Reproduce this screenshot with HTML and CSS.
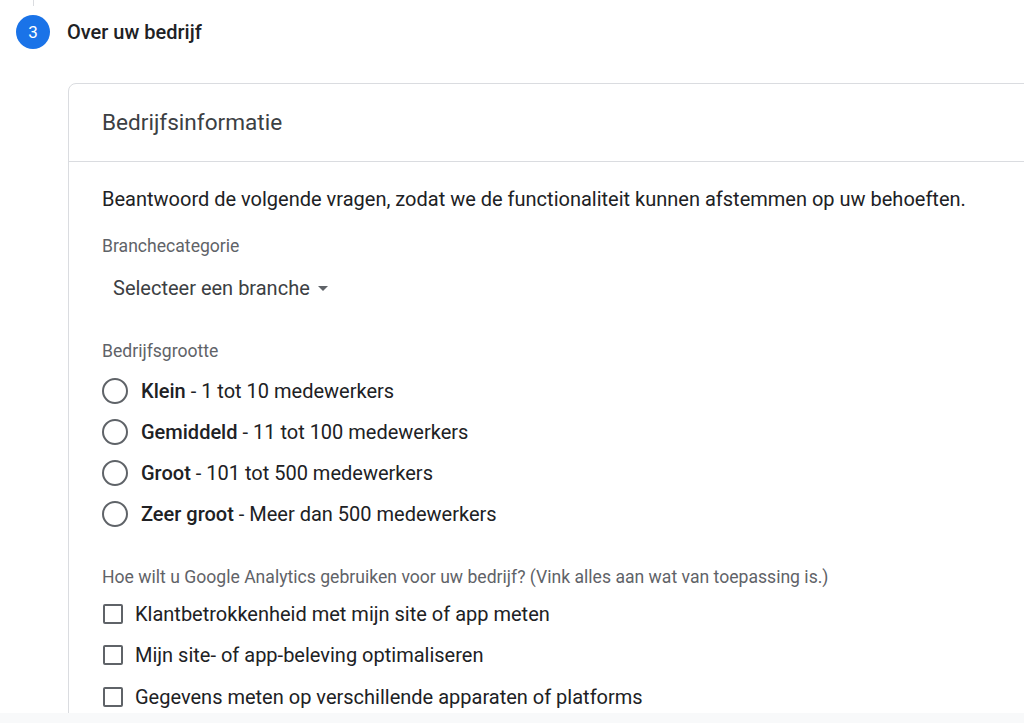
FILE: index.html
```html
<!DOCTYPE html>
<html lang="nl">
<head>
    <meta charset="UTF-8">
    <title>Over uw bedrijf</title>
    <meta name="viewport" content="width=device-width, initial-scale=1">
    <link rel="stylesheet" href="styles.css">
</head>
<body>

<div class="page">
    <div class="connector"></div>

    <div class="step">
        <span class="step-num">3</span>
        <span class="step-title">Over uw bedrijf</span>
    </div>

    <section class="card">
        <div class="card-head">Bedrijfsinformatie</div>

        <div class="card-body">
            <p class="intro">Beantwoord de volgende vragen, zodat we de functionaliteit kunnen afstemmen op uw behoeften.</p>

            <div class="label label-branche">Branchecategorie</div>
            <div class="select">
                Selecteer een branche
                <span class="caret"></span>
            </div>

            <div class="label label-size">Bedrijfsgrootte</div>
            <div class="radios">
                <label class="radio"><span class="circle"></span><span><b>Klein</b> - 1 tot 10 medewerkers</span></label>
                <label class="radio"><span class="circle"></span><span><b>Gemiddeld</b> - 11 tot 100 medewerkers</span></label>
                <label class="radio"><span class="circle"></span><span><b>Groot</b> - 101 tot 500 medewerkers</span></label>
                <label class="radio"><span class="circle"></span><span><b>Zeer groot</b> - Meer dan 500 medewerkers</span></label>
            </div>

            <div class="label label-use">Hoe wilt u Google Analytics gebruiken voor uw bedrijf? (Vink alles aan wat van toepassing is.)</div>
            <div class="checks">
                <label class="check"><span class="box"></span><span>Klantbetrokkenheid met mijn site of app meten</span></label>
                <label class="check"><span class="box"></span><span>Mijn site- of app-beleving optimaliseren</span></label>
                <label class="check"><span class="box"></span><span>Gegevens meten op verschillende apparaten of platforms</span></label>
            </div>
        </div>
    </section>
</div>

<div class="footer-band"></div>

</body>
</html>
```

FILE: styles.css
```css
html, body {
    margin: 0;
    padding: 0;
    background: #fff;
    font-family: Roboto, "Liberation Sans", sans-serif;
    color: #202124;
}
body {
    height: 723px;
    overflow: hidden;
}
.page {
    height: 713px;
    overflow: hidden;
}
.connector {
    height: 6px;
    margin-left: 33px;
    border-left: 1px solid #dadce0;
}
.step {
    display: flex;
    align-items: center;
    margin-top: 9px;
    padding-left: 16px;
    height: 34px;
}
.step-num {
    width: 34px;
    height: 34px;
    border-radius: 50%;
    background-color: #1a73e8;
    color: #fff;
    font-size: 17px;
    display: flex;
    align-items: center;
    justify-content: center;
}
.step-title {
    margin-left: 17px;
    font-size: 20px;
    font-weight: 500;
    color: #202124;
}
.card {
    margin-top: 34px;
    margin-left: 68px;
    width: 1100px;
    border: 1px solid #dadce0;
    border-radius: 8px 0 0 0;
    height: 800px;
}
.card-head {
    height: 77px;
    line-height: 77px;
    padding-left: 33px;
    font-size: 22.6px;
    color: #3c4043;
    border-bottom: 1px solid #dadce0;
}
.card-body {
    padding: 25px 33px 0;
}
.intro {
    margin: 0;
    font-size: 20px;
    line-height: 24px;
    color: #202124;
}
.label {
    font-size: 17.6px;
    line-height: 20px;
    color: #5f6368;
}
.label-branche {
    margin-top: 25px;
}
.select {
    margin-top: 20px;
    padding-left: 11px;
    display: flex;
    align-items: center;
    font-size: 20px;
    line-height: 24px;
    color: #3c4043;
}
.caret {
    margin-left: 8px;
    width: 0;
    height: 0;
    border-left: 5px solid transparent;
    border-right: 5px solid transparent;
    border-top: 5px solid #5f6368;
}
.label-size {
    margin-top: 41px;
}
.radios {
    margin-top: 9px;
}
.radio {
    display: flex;
    align-items: center;
    height: 41px;
    font-size: 20px;
    color: #202124;
}
.radio b {
    font-weight: 500;
}
.circle {
    width: 22px;
    height: 22px;
    border: 2px solid #5f6368;
    border-radius: 50%;
    margin-right: 13px;
    flex-shrink: 0;
}
.label-use {
    margin-top: 33px;
}
.checks {
    margin-top: 6px;
}
.check {
    display: flex;
    align-items: center;
    height: 41.5px;
    font-size: 20px;
    color: #202124;
}
.box {
    width: 16px;
    height: 16px;
    border: 2px solid #5f6368;
    border-radius: 2px;
    margin-left: 1px;
    margin-right: 12px;
    flex-shrink: 0;
}
.footer-band {
    height: 10px;
    background-color: #f8f9fa;
}
```
